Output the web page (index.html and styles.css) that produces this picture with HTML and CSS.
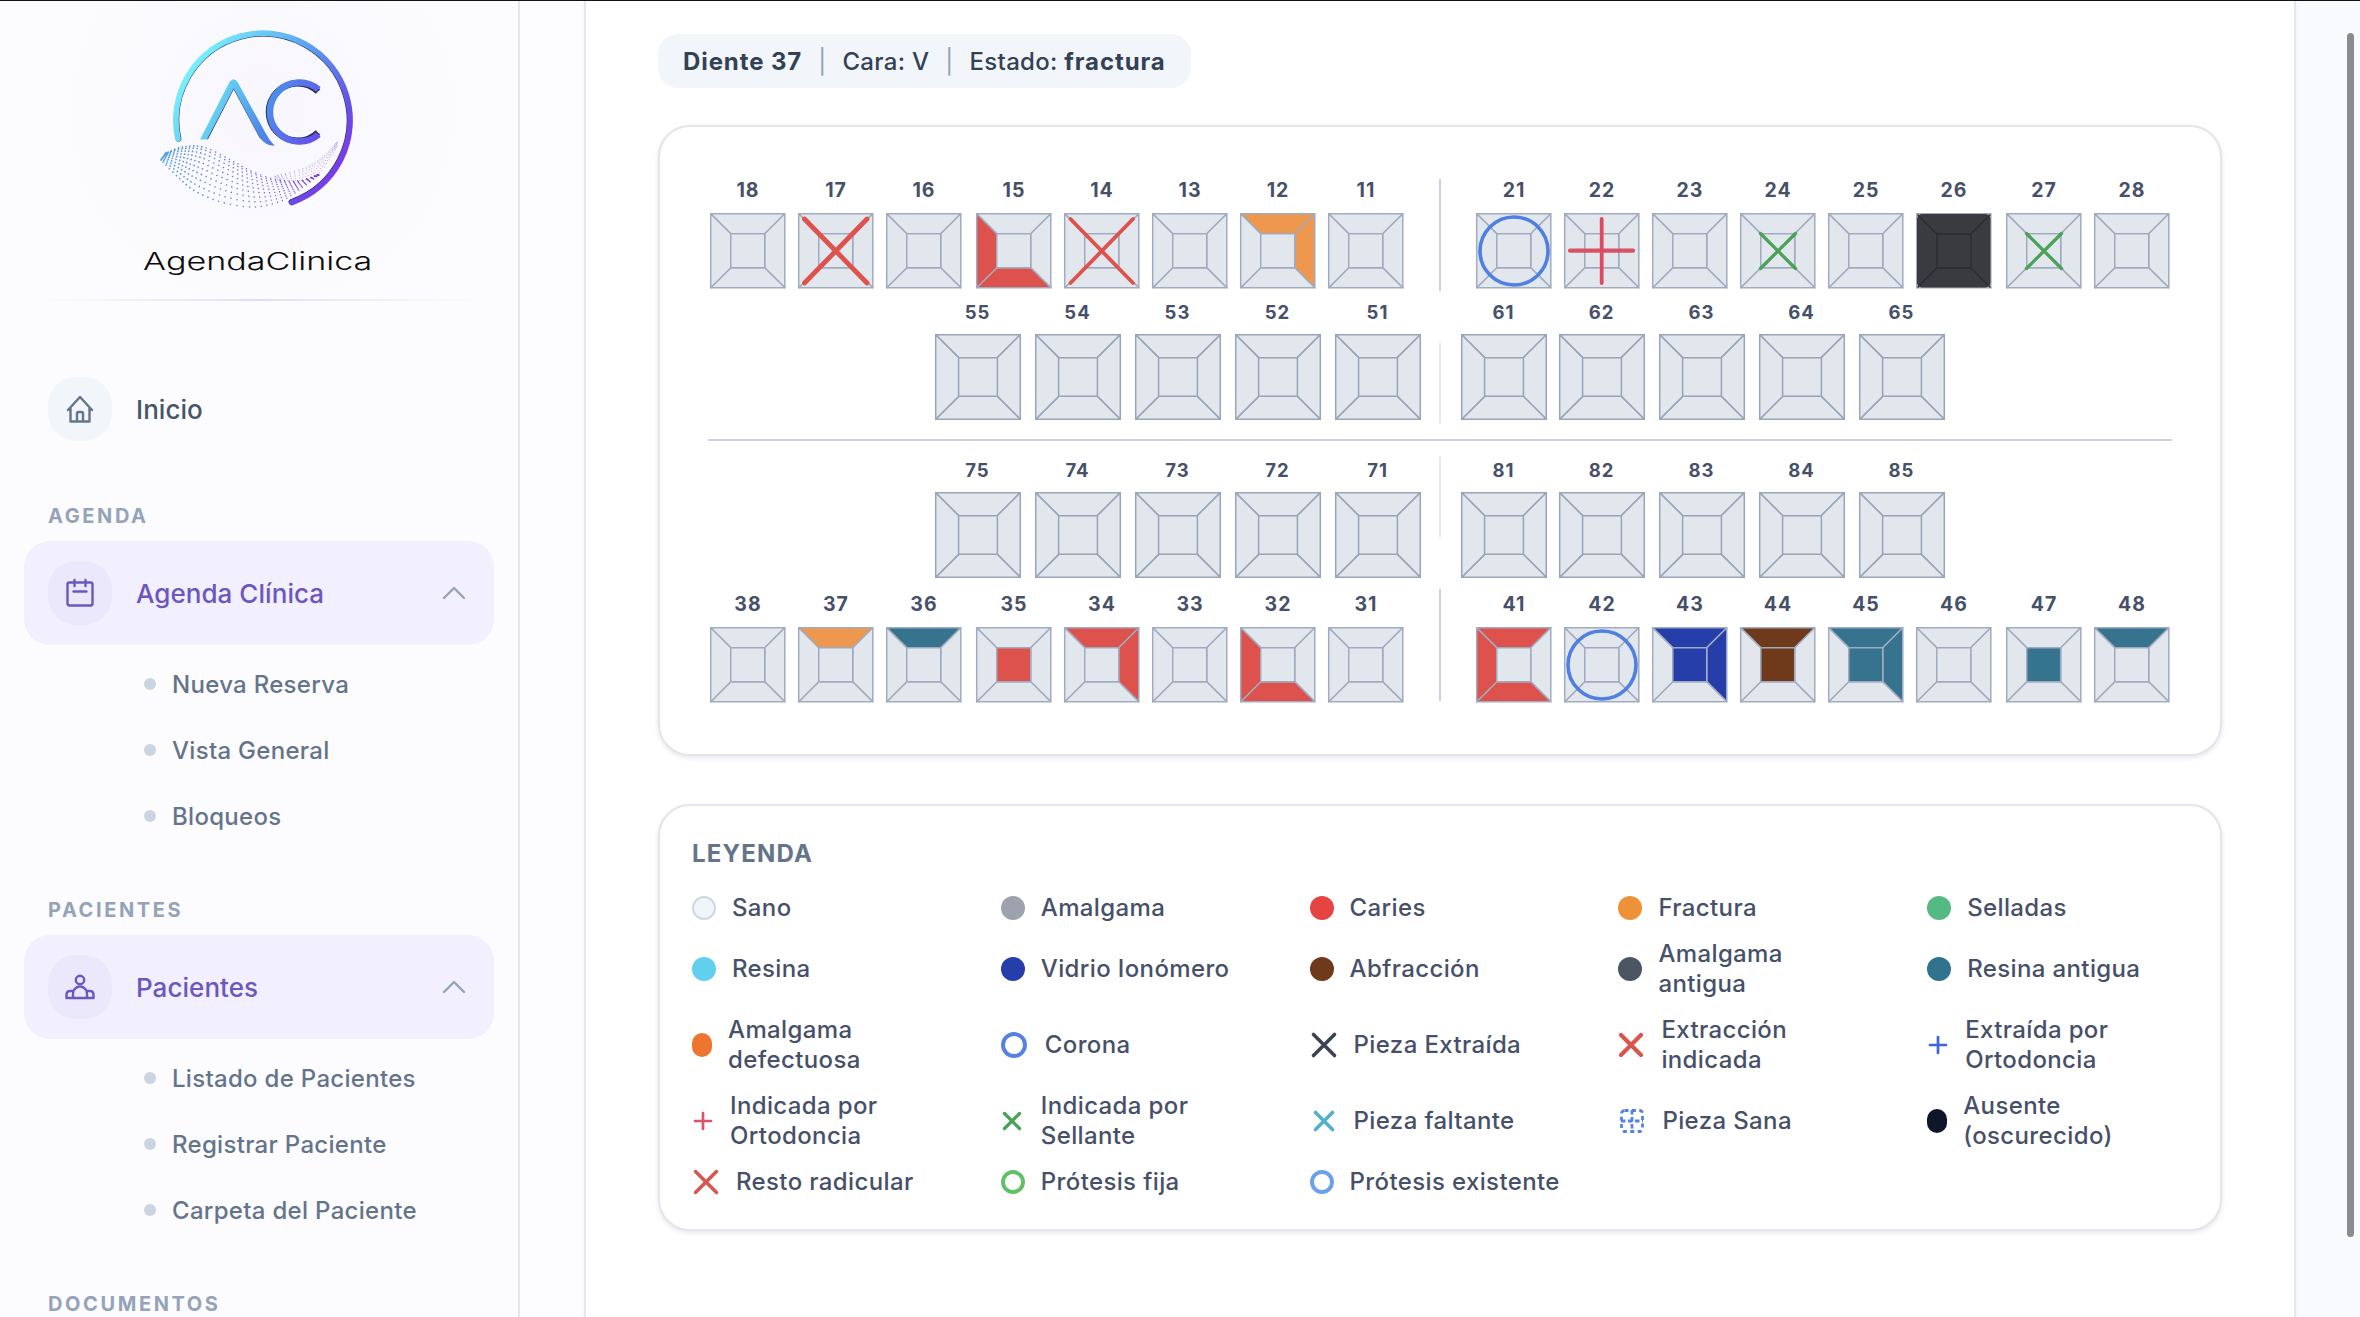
FILE: index.html
```html
<!DOCTYPE html>
<html lang="es">
<head>
<meta charset="utf-8">
<title>AgendaClinica</title>
<link rel="stylesheet" href="styles.css">
</head>
<body>
<div class="app">
  <aside class="sidebar">
    <div class="brand">
      <svg class="brand-logo" width="240" height="210" viewBox="0 0 240 210" fill="none">
        <defs>
          <linearGradient id="ring" gradientUnits="userSpaceOnUse" x1="50" y1="50" x2="200" y2="150">
            <stop offset="0" stop-color="#78effb"/><stop offset=".5" stop-color="#5a9cf0"/><stop offset=".85" stop-color="#6650e6"/><stop offset="1" stop-color="#7b39e8"/>
          </linearGradient>
          <linearGradient id="letters" gradientUnits="userSpaceOnUse" x1="70" y1="75" x2="180" y2="125">
            <stop offset="0" stop-color="#6be0f6"/><stop offset=".5" stop-color="#4d8bea"/><stop offset="1" stop-color="#6a48ea"/>
          </linearGradient>
        </defs>
        <path d="M39.6 119A86.400 86.400 0 1 1 152.4 181.800" stroke="#1b2a55" stroke-width="5.600" stroke-linecap="round"/>
        <path d="M39 119A87 87 0 1 1 152.7 182.4" stroke="url(#ring)" stroke-width="5.800" stroke-linecap="round"/>
        <path d="M94.700 68 121.500 118M94.700 68 68.300 119" stroke="#1b2a55" stroke-width="1.400"/>
        <path d="M90.500 62Q94.500 56.500 98.500 62L126.500 113Q130 120 135.700 125.700Q126 125.500 121 118L94.700 68.500 68 119.500H61Z" fill="url(#letters)"/>
        <path d="M179 71.500A28.800 28.800 0 1 0 179 112.500" stroke="#1b2a55" stroke-width="6.500"/>
        <path d="M179.500 69.500A29.500 29.500 0 1 0 179.500 114.500" stroke="url(#letters)" stroke-width="6.500"/>
        <g id="wave"></g>
      </svg>
      <div class="brand-name"><span>AgendaClinica</span></div>
      <div class="brand-rule"></div>
    </div>

    <a class="nav-item home">
      <span class="nav-icon"><svg width="32" height="32" viewBox="0 0 32 32" fill="none" stroke="#64748b" stroke-width="2.400" stroke-linecap="round" stroke-linejoin="round"><path d="M4 17 16 4 28 17M6.500 15v13.500h19V15M13 28v-7.500q0-1.500 1.500-1.500h3q1.500 0 1.500 1.500V28"/></svg></span>
      <span class="nav-label">Inicio</span>
    </a>

    <h3 class="section">AGENDA</h3>
    <a class="nav-item active">
      <span class="nav-icon"><svg width="32" height="32" viewBox="0 0 32 32" fill="none" stroke="#6b57bd" stroke-width="2.400" stroke-linecap="round" stroke-linejoin="round"><rect x="3.500" y="5.500" width="25" height="23" rx="2"/><path d="M10.500 3v6M21.500 3v6M9.500 14.500h13"/></svg></span>
      <span class="nav-label">Agenda Clínica</span>
      <svg class="chevron" width="24" height="14" viewBox="0 0 24 14" fill="none" stroke="#94a3b8" stroke-width="2.400" stroke-linecap="round" stroke-linejoin="round"><path d="M2 12 12 2 22 12"/></svg>
    </a>
    <ul class="submenu"><li>Nueva Reserva</li><li>Vista General</li><li>Bloqueos</li></ul>

    <h3 class="section">PACIENTES</h3>
    <a class="nav-item active">
      <span class="nav-icon"><svg width="32" height="32" viewBox="0 0 32 32" fill="none" stroke="#6b57bd" stroke-width="2.400" stroke-linecap="round" stroke-linejoin="round"><circle cx="16" cy="9" r="4.200"/><path d="M9 27v-4.500a7 7 0 0 1 14 0V27M9 20H5.500Q2.500 20.500 2.500 23.500V27h27v-3.500q0-3-3-3.500H23"/></svg></span>
      <span class="nav-label">Pacientes</span>
      <svg class="chevron" width="24" height="14" viewBox="0 0 24 14" fill="none" stroke="#94a3b8" stroke-width="2.400" stroke-linecap="round" stroke-linejoin="round"><path d="M2 12 12 2 22 12"/></svg>
    </a>
    <ul class="submenu"><li>Listado de Pacientes</li><li>Registrar Paciente</li><li>Carpeta del Paciente</li></ul>

    <h3 class="section">DOCUMENTOS</h3>
  </aside>

  <main class="content">
    <div class="panel">
      <div class="info"><b>Diente 37</b><i>|</i><span>Cara: V</span><i>|</i><span>Estado: <b>fractura</b></span></div>

      <section class="card chart" id="chart"></section>

      <section class="card legend">
        <h2>LEYENDA</h2>
        <ul class="legend-grid" id="legend"></ul>
      </section>
    </div>
  </main>
  <div class="scrollbar"></div>
</div>
<script src="app.js"></script>
</body>
</html>
```
FILE: styles.css
```css
* { box-sizing: border-box; margin: 0; padding: 0; }
body { width: 2360px; height: 1317px; overflow: hidden; font-family: Inter, "Liberation Sans", sans-serif; font-weight: 500; color: #475569; background: #fdfdff; }
ul { list-style: none; }
svg { display: block; flex: none; }

.app { position: relative; display: flex; height: 1317px; border-top: 1px solid #14101a; overflow: hidden; }

.sidebar { width: 520px; flex: none; padding: 0 24px; border-right: 2px solid #e5e6ec; background: radial-gradient(circle 200px at 262px 110px, #f8f6fd 0, #fcfcfe 100%) #fcfcfe; }
.brand { height: 300px; padding-top: 19px; display: flex; flex-direction: column; align-items: center; margin: 0 -2px; }
.brand-name { height: 70px; line-height: 64px; font-size: 24px; font-weight: 300; color: #0b0b0d; }
.brand-name span { display: inline-block; transform: translateX(-1px) scaleX(1.42); }
.brand-rule { width: 440px; height: 2px; flex: none; margin-top: -1px; background: linear-gradient(90deg, transparent, #e4dcf6, transparent); }

.nav-item { display: flex; align-items: center; height: 104px; padding: 0 28px 0 24px; border-radius: 26px; }
.nav-item.home { margin-top: 56px; }
.nav-icon { width: 64px; height: 64px; border-radius: 28px; background: #f2f6fa; display: grid; place-items: center; }
.nav-label { margin-left: 24px; font-size: 26px; letter-spacing: .05px; color: #475569; }
.active { background: #f2effe; }
.active .nav-icon { background: #ece8fb; }
.active .nav-label { color: #6b57bd; }
.chevron { margin-left: auto; }
.section { height: 24px; line-height: 24px; margin: 43px 0 13px 24px; font-size: 20px; font-weight: 700; letter-spacing: 2.6px; color: #94a3b8; }
.submenu { padding: 6px 0 6px 120px; }
.submenu li { display: flex; align-items: center; height: 66px; font-size: 24px; letter-spacing: .3px; color: #64748b; }
.submenu li::before { content: ""; width: 12px; height: 12px; margin-right: 16px; border-radius: 50%; background: #cbd5e1; }

.content { flex: 1; padding: 0 64px; background: linear-gradient(90deg, #fdfdff 0, #fdfdff 50%, #f9fafd 98%); }
.panel { width: 1712px; height: 1340px; padding: 33px 72px 0; background: #fff; border: 2px solid #e5e7ed; border-width: 0 2px; box-shadow: 0 0 5px rgba(15, 23, 42, .05); }
.info { display: inline-flex; align-items: center; height: 54px; padding: 0 25px; border-radius: 20px; background: #f2f5fa; font-size: 24px; letter-spacing: .3px; color: #334155; white-space: pre; }
.info i { font-style: normal; font-weight: 400; color: #94a3b8; margin: 0 16px; }
.info b { font-weight: 700; letter-spacing: .9px; }

.card { width: 1564px; border: 2px solid #e2e5ec; border-radius: 32px; background: #fff; box-shadow: 0 2px 5px rgba(15, 23, 42, .1); }
.chart { height: 631px; margin-top: 37px; padding: 52px 48px 0; }
.row { display: flex; }
.quad { display: grid; }
.upper { height: 112px; }
.temp { height: 120px; margin-top: 10px; padding-left: 227px; }
.row.adult { padding-left: 2px; }
.adult.lower { height: 112px; margin-top: 10px; }
.lower .tooth { padding-top: 4px; }
.midline { width: 2px; }
.adult .midline { height: 112px; margin: 0 35px 0 36px; background: #cdd2df; }
.temp .midline { height: 80px; margin: 42px 20px 0 18px; background: #e3e6ed; }
.temp.lower .midline { margin-top: -2px; }
.adult .left { grid-template-columns: 88px 88px 90px 88px 88px 88px 88px 75px; }
.adult .right { grid-template-columns: repeat(5, 88px) 90px 88px 75px; }
.temp .left { grid-template-columns: repeat(4, 100px) 86px; }
.temp .right { grid-template-columns: 98px repeat(3, 100px) 86px; }
.arch { height: 2px; margin-top: 18px; background: #cdd1df; }
.arch + .temp { margin-top: 18px; }
.tooth { width: 76px; }
.tooth span { display: block; height: 22px; line-height: 22px; margin-bottom: 12px; text-align: center; font-size: 19.500px; font-weight: 700; color: #475069; letter-spacing: 1px; }
.temp .tooth { width: 86px; padding-top: 0; }
.temp .tooth span { font-size: 18.500px; margin: 0 1px 11px 0; }
.tooth svg { overflow: visible; }

.legend { height: 427px; margin-top: 48px; padding: 32px; }
.legend h2 { height: 32px; line-height: 32px; font-size: 24px; font-weight: 700; letter-spacing: 1.2px; color: #64748b; }
.legend-grid { display: grid; grid-template-columns: repeat(5, 308.8px); margin-top: 23px; row-gap: 16px; }
.legend-grid li { display: flex; align-items: center; gap: 16px; min-height: 30px; font-size: 24px; letter-spacing: .37px; line-height: 30px; color: #475069; white-space: nowrap; }
.dot { width: 24px; height: 24px; border-radius: 50%; }
.dot.narrow { width: 20px; border-radius: 11px; }

.scrollbar { position: absolute; left: 2347px; top: 32px; width: 7px; height: 1204px; border-radius: 4px; background: #8b8b8e; }
```
FILE: app.js
```js
const RED = '#dd524c', ORANGE = '#ee984f', TEAL = '#36738e', BLUE = '#263ea9', BROWN = '#6f3a1b';

// Faces: t top, r right, b bottom, l left, c centre.
const teeth = {
  15: { l: RED, b: RED }, 12: { t: ORANGE, r: ORANGE },
  17: { cross: 4.8 }, 14: { cross: 3.8 }, 21: { crown: 1 }, 42: { crown: 1 }, 22: { plus: 1 },
  24: { seal: 1 }, 27: { seal: 1 }, 26: { absent: 1 },
  37: { t: ORANGE }, 36: { t: TEAL }, 35: { c: RED }, 34: { t: RED, r: RED }, 32: { l: RED, b: RED },
  41: { t: RED, l: RED, b: RED }, 43: { t: BLUE, c: BLUE, r: BLUE }, 44: { t: BROWN, c: BROWN },
  45: { t: TEAL, c: TEAL, r: TEAL }, 47: { c: TEAL }, 48: { t: TEAL }
};

function toothSvg(n, size) {
  const s = teeth[n] || {}, a = .7, z = size - .7, i = size * .275, j = size * .725;
  const line = size > 80 ? '#98a4b8' : '#a1abbf';
  const faces = {
    t: [a, a, z, a, j, i, i, i], r: [z, a, z, z, j, j, j, i],
    b: [z, z, a, z, i, j, j, j], l: [a, z, a, a, i, i, i, j], c: [i, i, j, i, j, j, i, j]
  };
  let out = `<svg width="${size}" height="${size}" fill="none" stroke-linecap="round">`;
  for (const f in faces) out += `<polygon points="${faces[f]}" fill="${s[f] || '#e2e7ee'}" stroke="${line}" stroke-width="1.5" stroke-linejoin="round"/>`;
  if (s.cross) out += `<path d="M6.5 6 69 70M69 6 6.500 70" stroke="${RED}" stroke-width="${s.cross}"/>`;
  if (s.crown) out += `<circle cx="38" cy="38" r="34" stroke="#4f80e1" stroke-width="3.6"/>`;
  if (s.plus) out += `<path d="M6 37.700H69" stroke="#d65367" stroke-width="4.2"/><path d="M37.700 6V70" stroke="#e04a5f" stroke-width="3.800"/>`;
  if (s.seal) out += `<path d="M20.500 20.500 55.500 55.500M55.500 20.500 20.500 55.500" stroke="#4ba157" stroke-width="3.3"/>`;
  if (s.absent) out += `<rect x="1" y="1" width="73.500" height="73.500" rx="5" fill="#3a3b3e"/><path d="M2 2 21 21M74 2 55 21M2 74 21 55M74 74 55 55M21 21h34v34H21z" stroke="#2a2b2f" stroke-width="1.300"/>`;
  return out + '</svg>';
}

function quad(cls, list, size) {
  return `<div class="quad ${cls}">${list.map(n => `<div class="tooth"><span>${n}</span>${toothSvg(n, size)}</div>`).join('')}</div>`;
}
const run = (from, to) => Array.from({ length: Math.abs(to - from) + 1 }, (_, k) => from + k * Math.sign(to - from));
function row(cls, left, right, size) {
  return `<div class="row ${cls}">${quad('left', left, size)}<div class="midline"></div>${quad('right', right, size)}</div>`;
}
document.getElementById('chart').innerHTML =
  row('adult upper', run(18, 11), run(21, 28), 75.5) +
  row('temp', run(55, 51), run(61, 65), 86) +
  '<div class="arch"></div>' +
  row('temp lower', run(75, 71), run(81, 85), 86) +
  row('adult lower', run(38, 31), run(41, 48), 75.5);

const dot = (c, extra = '') => `<i class="dot" style="background:${c};${extra}"></i>`;
const narrow = c => `<i class="dot narrow" style="background:${c}"></i>`;
const icon = (w, body) => `<svg width="${w}" height="28" viewBox="0 0 ${w} 28" fill="none" stroke-linecap="round">${body}</svg>`;
const cross = (w, x, r, c, sw) => icon(w, `<path d="M${x - r} ${14 - r}l${2 * r} ${2 * r}M${x + r} ${14 - r}l${-2 * r} ${2 * r}" stroke="${c}" stroke-width="${sw}"/>`);
const plus = c => icon(22, `<path d="M3 14h16M11 6v16" stroke="${c}" stroke-width="2.700"/>`);
const ring = (w, cx, r, c) => icon(w, `<circle cx="${cx}" cy="14" r="${r}" stroke="${c}" stroke-width="3.900"/>`);
const items = [
  [dot('#f1f5fb', 'border:2px solid #d0d7e3'), 'Sano'], [dot('#9ca3af'), 'Amalgama'], [dot('#e64442'), 'Caries'], [dot('#ef9136'), 'Fractura'], [dot('#55b984'), 'Selladas'],
  [dot('#60d0ee'), 'Resina'], [dot(BLUE), 'Vidrio Ionómero'], [dot(BROWN), 'Abfracción'], [dot('#4b5563'), 'Amalgama<br>antigua'], [dot('#31738f'), 'Resina antigua'],
  [narrow('#ee752f'), 'Amalgama<br>defectuosa'], [ring(28, 13, 11, '#5481e2'), 'Corona'], [cross(28, 14, 10.5, '#3c4353', 3.6), 'Pieza Extraída'], [cross(27, 13, 10, '#d9534f', 4.2), 'Extracción<br>indicada'], [plus('#3f66d8'), 'Extraída por<br>Ortodoncia'],
  [plus('#d9566a'), 'Indicada por<br>Ortodoncia'], [cross(24, 11, 7.500, '#4ba157', 3.300), 'Indicada por<br>Sellante'], [cross(28, 14, 8.500, '#55b0cc', 3.600), 'Pieza faltante'],
  [icon(28, '<rect x="3.500" y="3.500" width="21" height="21" rx="3" stroke="#5481e2" stroke-width="2.800" stroke-dasharray="4 3.400"  stroke-linecap="butt"/><path d="M14 3v22M3 14h22" stroke="#5481e2" stroke-width="2.800" stroke-dasharray="4.500 2.500" stroke-linecap="butt"/>'), 'Pieza Sana'],
  [narrow('#0f1629'), 'Ausente<br>(oscurecido)'],
  [cross(28, 14, 10.500, '#d9564f', 3.500), 'Resto radicular'], [ring(24, 12, 10, '#62c067'), 'Prótesis fija'], [ring(24, 12, 10, '#6c9fec'), 'Prótesis existente']
];
document.getElementById('legend').innerHTML = items.map(([g, t]) => `<li>${g}<span>${t}</span></li>`).join('');

// Dotted wave of the logo: dots spread between an upper and a lower curve.
function along(pts, u) {
  const k = u * (pts.length - 1), i = Math.min(Math.floor(k), pts.length - 2), t = k - i;
  const p = m => pts[Math.max(0, Math.min(pts.length - 1, m))];
  return [0, 1].map(d => {
    const [a, b, c, e] = [p(i - 1)[d], p(i)[d], p(i + 1)[d], p(i + 2)[d]];
    return .5 * (2 * b + (c - a) * t + (2 * a - 5 * b + 4 * c - e) * t * t + (3 * b - a - 3 * c + e) * t * t * t);
  });
}
function sheet(top, bottom, cols, rows, r, alpha) {
  let s = '';
  for (let a = 0; a <= cols; a++) for (let b = 0; b <= rows; b++) {
    const p = along(top, a / cols), q = along(bottom, a / cols), v = Math.pow(b / rows, 1.3);
    const x = p[0] + (q[0] - p[0]) * v, y = p[1] + (q[1] - p[1]) * v, h = Math.min(1, Math.max(0, (x - 30) / 130));
    s += `<circle cx="${x.toFixed(1)}" cy="${y.toFixed(1)}" r="${(r - .25 * h).toFixed(2)}" fill="rgb(${70 + 35 * h | 0},${150 - 95 * h | 0},${218 - 10 * h | 0})" opacity="${alpha}"/>`;
  }
  return s;
}
document.getElementById('wave').innerHTML =
  sheet([[27, 133], [44, 127], [64, 127], [88, 138], [110, 150], [135, 159], [158, 161], [178, 155]],
        [[22, 140], [38, 156], [56, 171], [82, 182], [114, 187], [142, 181], [163, 168], [180, 155]], 36, 9, .9, .9) +
  sheet([[136, 156], [165, 148], [185, 136], [198, 122]], [[140, 160], [165, 160], [182, 151], [198, 127]], 22, 5, .75, .5);
```
